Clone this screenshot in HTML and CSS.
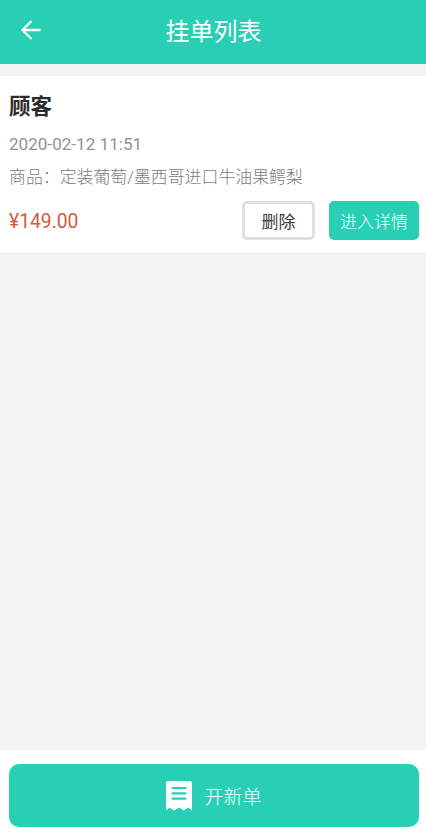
FILE: index.html
```html
<!DOCTYPE html>
<html lang="zh-CN">
<head>
<meta charset="utf-8">
<title>挂单列表</title>
<link rel="stylesheet" href="styles.css">
</head>
<body>
<header class="topbar">
  <svg class="back" viewBox="0 0 22 22"><path d="M11.500 2 2.500 11l9 9M2.500 11h18" fill="none" stroke="#fff" stroke-width="2.3"/></svg>
  <h1 class="title">挂单列表</h1>
</header>
<main class="list">
  <article class="order">
    <h2 class="customer">顾客</h2>
    <time class="date">2020-02-12 11:51</time>
    <p class="goods">商品：定装葡萄/墨西哥进口牛油果鳄梨</p>
    <div class="row">
      <span class="price">¥149.00</span>
      <button class="btn btn-delete">删除</button>
      <button class="btn btn-detail">进入详情</button>
    </div>
  </article>
</main>
<footer class="footer">
  <button class="new-order">
    <svg class="receipt" viewBox="0 0 26 30"><path d="M2 0h22a2 2 0 0 1 2 2v27.500l-3.500-3-4.700 3-4.800-3-4.800 3-4.700-3-3.500 3V2a2 2 0 0 1 2-2z" fill="#fff"/><path d="M6.500 7h13M6.500 12.300h13M6.500 17.600h13" stroke="#29cfb5" stroke-width="2.2" stroke-linecap="round"/></svg>
    <span>开新单</span>
  </button>
</footer>
</body>
</html>
```
FILE: styles.css
```css
* { box-sizing: border-box; }
body {
  margin: 0;
  height: 835px;
  display: flex;
  flex-direction: column;
  background: #f3f3f3;
  font-family: Roboto, "Noto Sans CJK SC", sans-serif;
}
h1, h2, p { margin: 0; }
button { border: 0; padding: 0; font-family: inherit; }
.topbar {
  height: 64px;
  padding: 0 20px;
  display: grid;
  grid-template-columns: 22px 1fr 22px;
  align-items: center;
  background: #29cfb5;
  color: #fff;
}
.back { width: 22px; height: 22px; margin-top: -4px; }
.title {
  padding-left: 1px;
  text-align: center;
  font-size: 24px;
  font-weight: 400;
  line-height: 36px;
}
.list { flex: 1; padding-top: 12px; }
.order {
  height: 178px;
  padding: 16px 7px 0 9px;
  background: #fff;
  border-bottom: 1px solid #ebebeb;
}
.customer { font-size: 21.5px; line-height: 30px; color: #2c2c2c; }
.date { display: block; margin-top: 10px; font-size: 17.1px; line-height: 24px; color: #929292; }
.goods { margin-top: 9px; font-size: 16.9px; line-height: 24px; color: #7c7c7c; font-weight: 300; white-space: nowrap; }
.row { display: flex; align-items: center; margin-top: 12px; }
.price { flex: 1; padding-top: 1px; font-size: 19.3px; color: #d9583c; }
.btn { height: 39px; border-radius: 5px; font-size: 17px; }
.btn-delete { width: 73px; border: 3px solid #dfdfdf; background: #fff; color: #3c3c3c; }
.btn-detail { width: 90px; margin-left: 14px; background: #29cfb5; color: #fff; font-weight: 300; }
.footer { height: 85px; padding: 14px 7px 0 9px; background: #fff; }
.new-order {
  width: 100%;
  height: 63px;
  display: flex;
  align-items: center;
  justify-content: center;
  gap: 12px;
  border-radius: 10px;
  background: #29cfb5;
  color: #fff;
  font-size: 19px;
  font-weight: 300;
}
.receipt { width: 26px; height: 30px; }
```
